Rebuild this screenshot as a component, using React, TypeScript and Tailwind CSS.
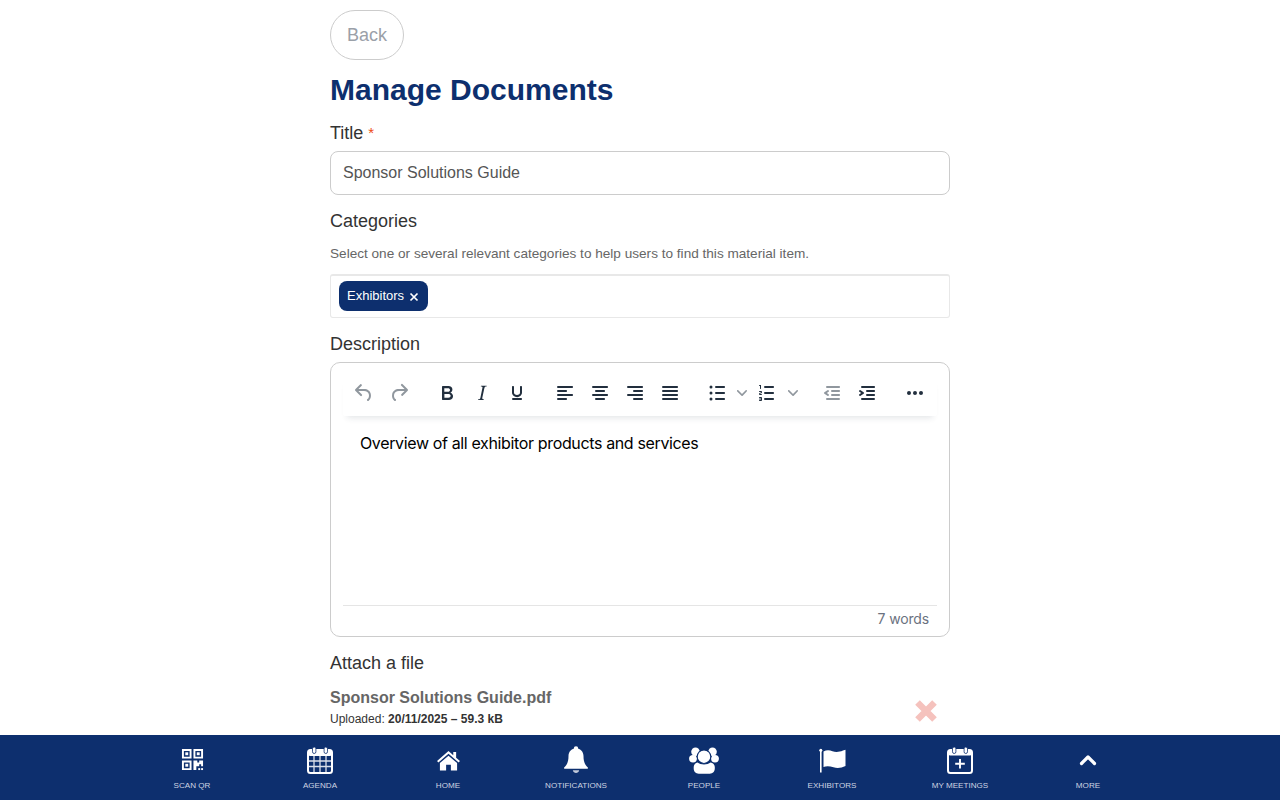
import React from "react";

const P: Record<string, string> = {
  undo: "M6.4 8H12c3.7 0 6.2 2 6.8 5.1.6 2.7-.4 5.6-2.3 6.8a1 1 0 01-1-1.8c1.1-.6 1.8-2.7 1.4-4.6-.5-2.1-2.1-3.5-4.9-3.5H6.4l3.3 3.3a1 1 0 11-1.4 1.4l-5-5a1 1 0 010-1.4l5-5a1 1 0 011.4 1.4L6.4 8z",
  redo: "M17.6 10H12c-2.8 0-4.4 1.4-4.9 3.5-.4 2 .3 4 1.4 4.6a1 1 0 11-1 1.8c-2-1.2-2.9-4.1-2.3-6.8.6-3 3-5.1 6.8-5.1h5.6l-3.3-3.3a1 1 0 111.4-1.4l5 5a1 1 0 010 1.4l-5 5a1 1 0 01-1.4-1.4l3.3-3.3z",
  bold: "M7.8 19c-.3 0-.5 0-.6-.2l-.2-.5V5.7c0-.2 0-.4.2-.5l.6-.2h5c1.5 0 2.7.3 3.5 1 .7.6 1.1 1.4 1.1 2.5a3 3 0 01-.6 1.9c-.4.6-1 1-1.6 1.2.4.1.9.3 1.3.6s.8.7 1 1.2c.4.4.5 1 .5 1.6 0 1.3-.4 2.3-1.3 3-.8.7-2.1 1-3.8 1H7.8zm5-8.3c.6 0 1.2-.1 1.6-.5.4-.3.6-.7.6-1.3 0-1.1-.8-1.7-2.3-1.7H9.3v3.5h3.4zm.5 6c.7 0 1.3-.1 1.7-.4.4-.4.6-.9.6-1.5s-.2-1-.7-1.4c-.4-.3-1-.4-2-.4H9.4v3.8h4z",
  italic: "M16.7 4.7l-.1.9h-.3c-.6 0-1 0-1.4.3-.3.3-.4.6-.5 1.1l-2.1 9.8v.6c0 .5.4.8 1.4.8h.2l-.2.8H8l.2-.8h.2c1.1 0 1.8-.5 2-1.5l2-9.8.1-.5c0-.6-.4-.8-1.4-.8h-.3l.2-.9h5.8z",
  underline: "M16 5c.6 0 1 .4 1 1v5.5a4 4 0 01-.4 1.8l-1 1.4a5.3 5.3 0 01-5.5 1 5 5 0 01-1.6-1c-.5-.4-.8-.9-1.1-1.4a4 4 0 01-.4-1.8V6c0-.6.4-1 1-1s1 .4 1 1v5.5c0 .3 0 .6.2 1l.6.7a3.3 3.3 0 002.2.8 3.4 3.4 0 002.2-.8c.3-.2.4-.5.6-.8l.2-.9V6c0-.6.4-1 1-1zM8 17h8c.6 0 1 .4 1 1s-.4 1-1 1H8a1 1 0 010-2z",
  left: "M5 5h14c.6 0 1 .4 1 1s-.4 1-1 1H5a1 1 0 110-2zm0 4h8c.6 0 1 .4 1 1s-.4 1-1 1H5a1 1 0 110-2zm0 8h8c.6 0 1 .4 1 1s-.4 1-1 1H5a1 1 0 010-2zm0-4h14c.6 0 1 .4 1 1s-.4 1-1 1H5a1 1 0 010-2z",
  center: "M5 5h14c.6 0 1 .4 1 1s-.4 1-1 1H5a1 1 0 110-2zm3 4h8c.6 0 1 .4 1 1s-.4 1-1 1H8a1 1 0 110-2zm0 8h8c.6 0 1 .4 1 1s-.4 1-1 1H8a1 1 0 010-2zm-3-4h14c.6 0 1 .4 1 1s-.4 1-1 1H5a1 1 0 010-2z",
  right: "M5 5h14c.6 0 1 .4 1 1s-.4 1-1 1H5a1 1 0 110-2zm6 4h8c.6 0 1 .4 1 1s-.4 1-1 1h-8a1 1 0 010-2zm0 8h8c.6 0 1 .4 1 1s-.4 1-1 1h-8a1 1 0 010-2zm-6-4h14c.6 0 1 .4 1 1s-.4 1-1 1H5a1 1 0 010-2z",
  justify: "M5 5h14c.6 0 1 .4 1 1s-.4 1-1 1H5a1 1 0 110-2zm0 4h14c.6 0 1 .4 1 1s-.4 1-1 1H5a1 1 0 110-2zm0 4h14c.6 0 1 .4 1 1s-.4 1-1 1H5a1 1 0 010-2zm0 4h14c.6 0 1 .4 1 1s-.4 1-1 1H5a1 1 0 010-2z",
  bullets: "M11 5h8c.6 0 1 .4 1 1s-.4 1-1 1h-8a1 1 0 010-2zm0 6h8c.6 0 1 .4 1 1s-.4 1-1 1h-8a1 1 0 010-2zm0 6h8c.6 0 1 .4 1 1s-.4 1-1 1h-8a1 1 0 010-2zM4.500 6a1.500 1.500 0 103 0 1.500 1.500 0 00-3 0zm0 6a1.500 1.500 0 103 0 1.500 1.500 0 00-3 0zm0 6a1.500 1.500 0 103 0 1.500 1.500 0 00-3 0z",
  numbers: "M10 17h8c.6 0 1 .4 1 1s-.4 1-1 1h-8a1 1 0 010-2zm0-6h8c.6 0 1 .4 1 1s-.4 1-1 1h-8a1 1 0 010-2zm0-6h8c.6 0 1 .4 1 1s-.4 1-1 1h-8a1 1 0 110-2zM6 4v3.500c0 .3-.2.5-.5.5a.5.5 0 01-.5-.5V5h-.5a.5.5 0 010-1H6zm-1 8.800l.2.2h1.300c.3 0 .5.2.5.5s-.2.5-.5.5H4.900a1 1 0 01-.9-1V13c0-.4.3-.8.6-1l1.200-.4.2-.3a.2.2 0 00-.2-.2H4.500a.5.5 0 01-.5-.5c0-.3.2-.5.5-.5h1.600c.5 0 .9.4.9 1v.1c0 .4-.3.8-.6 1l-1.200.4-.2.3zM7 17v2c0 .6-.4 1-1 1H4.500a.5.5 0 010-1h1.200c.2 0 .3-.1.3-.3 0-.2-.1-.3-.3-.3H4.400a.4.4 0 110-.8h1.300c.2 0 .3-.1.3-.3 0-.2-.1-.3-.3-.3H4.500a.5.5 0 110-1H6c.6 0 1 .4 1 1z",
  outdent: "M7 5h12c.6 0 1 .4 1 1s-.4 1-1 1H7a1 1 0 110-2zm5 4h7c.6 0 1 .4 1 1s-.4 1-1 1h-7a1 1 0 010-2zm0 4h7c.6 0 1 .4 1 1s-.4 1-1 1h-7a1 1 0 010-2zm-5 4h12a1 1 0 010 2H7a1 1 0 010-2zm1.600-3.800a1 1 0 01-1.200 1.600l-3-2a1 1 0 010-1.600l3-2a1 1 0 011.200 1.600L6.800 12l1.800 1.200z",
  indent: "M7 5h12c.6 0 1 .4 1 1s-.4 1-1 1H7a1 1 0 110-2zm5 4h7c.6 0 1 .4 1 1s-.4 1-1 1h-7a1 1 0 010-2zm0 4h7c.6 0 1 .4 1 1s-.4 1-1 1h-7a1 1 0 010-2zm-5 4h12a1 1 0 010 2H7a1 1 0 010-2zm-2.600-3.800L6.200 12l-1.800-1.200a1 1 0 011.200-1.600l3 2a1 1 0 010 1.600l-3 2a1 1 0 11-1.200-1.600z",
  more: "M6 10a2 2 0 00-2 2c0 1.100.9 2 2 2a2 2 0 002-2 2 2 0 00-2-2zm12 0a2 2 0 00-2 2c0 1.100.9 2 2 2a2 2 0 002-2 2 2 0 00-2-2zm-6 0a2 2 0 00-2 2c0 1.100.9 2 2 2a2 2 0 002-2 2 2 0 00-2-2z",
};

function Tool({ name, off, cls = "" }: { name: string; off?: boolean; cls?: string }) {
  return (
    <span className={`flex h-[34px] w-[35px] shrink-0 items-center justify-center ${cls}`}>
      <svg viewBox="0 0 24 24" className={`h-6 w-6 ${off ? "fill-[#222f3e]/50" : "fill-[#222f3e]"}`}>
        <path d={P[name]} />
      </svg>
    </span>
  );
}

function Chevron({ cls = "" }: { cls?: string }) {
  return (
    <svg viewBox="0 0 10 10" className={`h-[10px] w-[10px] shrink-0 fill-[#222f3e]/50 ${cls}`}>
      <path d="M8.700 2.200c.3-.3.8-.3 1 0 .4.4.4.9 0 1.200L5.700 7.800c-.3.3-.9.3-1.200 0L.2 3.400a.8.8 0 010-1.200c.3-.3.8-.3 1.100 0L5 6l3.700-3.800z" />
    </svg>
  );
}

const QrIcon = () => (
  <svg viewBox="0 0 24 24" className="mb-[2px] h-[23px] w-[23px] fill-white">
    <path fillRule="evenodd" d="M1 1h10v10H1zM3 3v6h6V3zM13 1h10v10H13zM15 3v6h6V3zM1 13h10v10H1zM3 15v6h6v-6z" />
    <rect x="4.500" y="4.500" width="3" height="3" />
    <rect x="16.500" y="4.500" width="3" height="3" />
    <rect x="4.500" y="16.500" width="3" height="3" />
    <path d="M13 13h4v2h2v-2h4v6h-2v-2h-2v2h-3v4h-3z" />
    <rect x="18" y="21" width="2" height="2" />
    <rect x="21" y="21" width="2" height="2" />
  </svg>
);

const AgendaIcon = () => (
  <svg viewBox="0 0 26 28" className="h-7 w-[26px]">
    <rect x="1" y="4" width="24" height="23" rx="2.500" fill="none" stroke="#fff" strokeWidth="2" />
    <rect x="1" y="4" width="24" height="6" rx="2" fill="#fff" />
    <rect x="5.500" y="1" width="3.400" height="6.500" rx="1.700" fill="#fff" stroke="#0d2f6e" strokeWidth=".8" />
    <rect x="17.100" y="1" width="3.400" height="6.500" rx="1.700" fill="#fff" stroke="#0d2f6e" strokeWidth=".8" />
    <path d="M7 10v16M13 10v16M19 10v16M2 15h22M2 20.500h22" stroke="#fff" strokeWidth="1.300" opacity=".85" />
  </svg>
);

const HomeIcon = () => (
  <svg viewBox="0 0 26 22" className="h-[21px] w-[25px] fill-white">
    <path d="M13 1 1 11.500l1.400 1.600L13 4l10.600 9.100 1.400-1.600-4-3.500V2h-3v3.400z" />
    <path d="M13 6 4 13.700V21.500h6.500v-6h5v6H22v-7.800z" />
  </svg>
);

const BellIcon = () => (
  <svg viewBox="0 0 26 28" className="h-7 w-[26px] fill-white">
    <circle cx="13" cy="2.500" r="2.200" />
    <path d="M13 2.500c-4.800 0-7.500 3.400-7.500 7.600 0 6-1.500 8.700-4.300 11.400-.5.500-.2 1.300.5 1.300h22.600c.7 0 1-.8.500-1.300-2.800-2.700-4.300-5.400-4.300-11.400 0-4.200-2.700-7.600-7.500-7.600z" />
    <path d="M9.800 24.200c.4 1.700 1.700 2.800 3.200 2.800s2.800-1.100 3.200-2.800z" opacity=".75" />
  </svg>
);

const PeopleIcon = () => (
  <svg viewBox="0 0 30 27" className="h-[27px] w-[30px] fill-white">
    <circle cx="6.500" cy="4.700" r="4.300" />
    <circle cx="23.500" cy="4.700" r="4.300" />
    <ellipse cx="4" cy="11.800" rx="3.900" ry="3.700" />
    <ellipse cx="26" cy="11.800" rx="3.900" ry="3.700" />
    <circle cx="15" cy="9.700" r="6.800" stroke="#0d2f6e" strokeWidth="1.100" />
    <path d="M8.500 15.500c1.500 1.300 4 2 6.500 2s5-.7 6.500-2c2.500.2 4.300 2.300 4.300 4.500v1.500c0 3-2 5.200-5 5.200H9.700c-3 0-5-2.200-5-5.200V20c0-2.200 1.800-4.300 3.800-4.500z" />
  </svg>
);

const FlagIcon = () => (
  <svg viewBox="0 0 27 25" className="h-[25px] w-[27px] fill-white">
    <circle cx="1.800" cy="2.300" r="1.500" />
    <rect x="1" y="2.500" width="1.600" height="22" />
    <path d="M4.500 3.500c3-1.700 6-1.500 9-.3s6.500 1 10.500-.7l2.500-.8v16.300c-4 1.900-8 2.500-12 1.300s-7-1.300-10-.3z" />
  </svg>
);

const MeetingIcon = () => (
  <svg viewBox="0 0 26 28" className="h-7 w-[26px]">
    <rect x="1" y="4" width="24" height="23" rx="2.500" fill="none" stroke="#fff" strokeWidth="2" />
    <rect x="1" y="4" width="24" height="5.500" rx="2" fill="#fff" />
    <rect x="5.500" y="1" width="3.400" height="6.500" rx="1.700" fill="#fff" stroke="#0d2f6e" strokeWidth=".8" />
    <rect x="17.100" y="1" width="3.400" height="6.500" rx="1.700" fill="#fff" stroke="#0d2f6e" strokeWidth=".8" />
    <path d="M13 13v9.500M8.200 17.800h9.600" stroke="#fff" strokeWidth="1.900" />
  </svg>
);

const UpIcon = () => (
  <svg viewBox="0 0 18 12" className="h-3 w-[18px]">
    <path d="M2.500 9.500 9 3l6.500 6.500" fill="none" stroke="#fff" strokeWidth="3.200" strokeLinecap="round" strokeLinejoin="round" />
  </svg>
);

const NAV = [
  { label: "SCAN QR", icon: <QrIcon /> },
  { label: "AGENDA", icon: <AgendaIcon /> },
  { label: "HOME", icon: <HomeIcon /> },
  { label: "NOTIFICATIONS", icon: <BellIcon /> },
  { label: "PEOPLE", icon: <PeopleIcon /> },
  { label: "EXHIBITORS", icon: <FlagIcon /> },
  { label: "MY MEETINGS", icon: <MeetingIcon /> },
  { label: "MORE", icon: <UpIcon /> },
];

export default function App() {
  return (
    <div className="flex h-screen flex-col overflow-hidden bg-white font-['Liberation_Sans',Arial,sans-serif] text-[#333]">
      <main className="min-h-0 flex-1 overflow-hidden">
        <div className="mx-auto w-[620px] pt-[10px]">
          <button className="h-[50px] w-[74px] rounded-[25px] border border-[#ccc] text-[18px] text-[#9aa0a8]">Back</button>
          <h1 className="mt-[12px] text-[30px] font-bold leading-[36px] text-[#0d2f6e]">Manage Documents</h1>

          <div className="mt-[12px] text-[18px] leading-[26px] text-[#333]">
            Title <span className="align-top text-[15px] text-[#ee4a14]">*</span>
          </div>
          <div className="mt-[5px] flex h-[44px] items-center rounded-[8px] border border-[#ccc] px-3 text-[16px] text-[#555]">
            Sponsor Solutions Guide
          </div>

          <div className="mt-[13px] text-[18px] leading-[26px] text-[#333]">Categories</div>
          <p className="mt-[12px] text-[13.600px] leading-[16px] text-[#666]">
            Select one or several relevant categories to help users to find this material item.
          </p>
          <div className="mt-[12px] flex h-[44px] items-start rounded-[3px] border border-[#e8e8e8] border-t-2 pl-2 pt-[5px]">
            <span className="flex h-[30px] w-[89px] items-center gap-[4px] rounded-[8px] bg-[#0d2f6e] pl-2 text-[13px] font-medium text-white">
              Exhibitors
              <svg viewBox="0 0 10 10" className="ml-[1px] mt-[2px] h-[10px] w-[10px]">
                <path d="M1.500 1.500l7 7M8.500 1.500l-7 7" stroke="#fff" strokeWidth="1.700" />
              </svg>
            </span>
          </div>

          <div className="mt-[13px] text-[18px] leading-[26px] text-[#333]">Description</div>
          <div className="mt-[5px] flex h-[275px] flex-col rounded-[10px] border border-[#ccc] px-3">
            <div className="mt-[13px] flex h-[40px] items-start rounded-b-[2px] shadow-[0_6px_6px_-4px_rgba(34,47,62,0.12)]">
              <Tool name="undo" off cls="ml-[3px]" />
              <Tool name="redo" off cls="ml-[0px]" />
              <Tool name="bold" cls="ml-[13px]" />
              <Tool name="italic" />
              <Tool name="underline" />
              <Tool name="left" cls="ml-[13px]" />
              <Tool name="center" />
              <Tool name="right" />
              <Tool name="justify" />
              <Tool name="bullets" cls="ml-[12px]" />
              <Chevron cls="mt-[12px] ml-[3px]" />
              <Tool name="numbers" cls="ml-[2px]" />
              <Chevron cls="mt-[12px] ml-[4px]" />
              <Tool name="outdent" off cls="ml-[16px]" />
              <Tool name="indent" />
              <Tool name="more" cls="ml-[13px]" />
            </div>
            <div className="flex-1 px-[17px] pt-[17px] font-['Inter',sans-serif] text-[16px] leading-[20px] tracking-[-0.36px] text-black">
              Overview of all exhibitor products and services
            </div>
            <div className="flex h-[31px] items-center justify-end border-t border-[#e5e5e5] pb-[5px] pr-2 font-['Inter',sans-serif] text-[14px] tracking-[-0.15px] text-[#6b7280]">
              7 words
            </div>
          </div>

          <div className="mt-[13px] text-[18px] leading-[26px] text-[#333]">Attach a file</div>
          <div className="mt-[11px] flex items-start justify-between">
            <div>
              <div className="text-[16px] font-bold leading-[22px] text-[#666]">Sponsor Solutions Guide.pdf</div>
              <div className="mt-[1px] text-[12px] leading-[18px] text-[#333]">
                Uploaded: <b>20/11/2025 – 59.3 kB</b>
              </div>
            </div>
            <svg viewBox="0 0 24 24" className="mr-[12px] mt-[12px] h-6 w-6">
              <path d="M3.500 3.500l17 17M20.500 3.500l-17 17" stroke="#f5c2bd" strokeWidth="6.500" strokeLinecap="butt" />
            </svg>
          </div>
        </div>
      </main>

      <nav className="flex h-[65px] shrink-0 justify-center bg-[#0d2f6e]">
        {NAV.map((n) => (
          <div key={n.label} className="flex w-32 flex-col items-center">
            <div className="flex h-[44px] w-full items-center justify-center pt-[6px]">{n.icon}</div>
            <div className="mt-[1px] text-[8.100px] leading-[11px] text-[#cdd5e3]">{n.label}</div>
          </div>
        ))}
      </nav>
    </div>
  );
}
